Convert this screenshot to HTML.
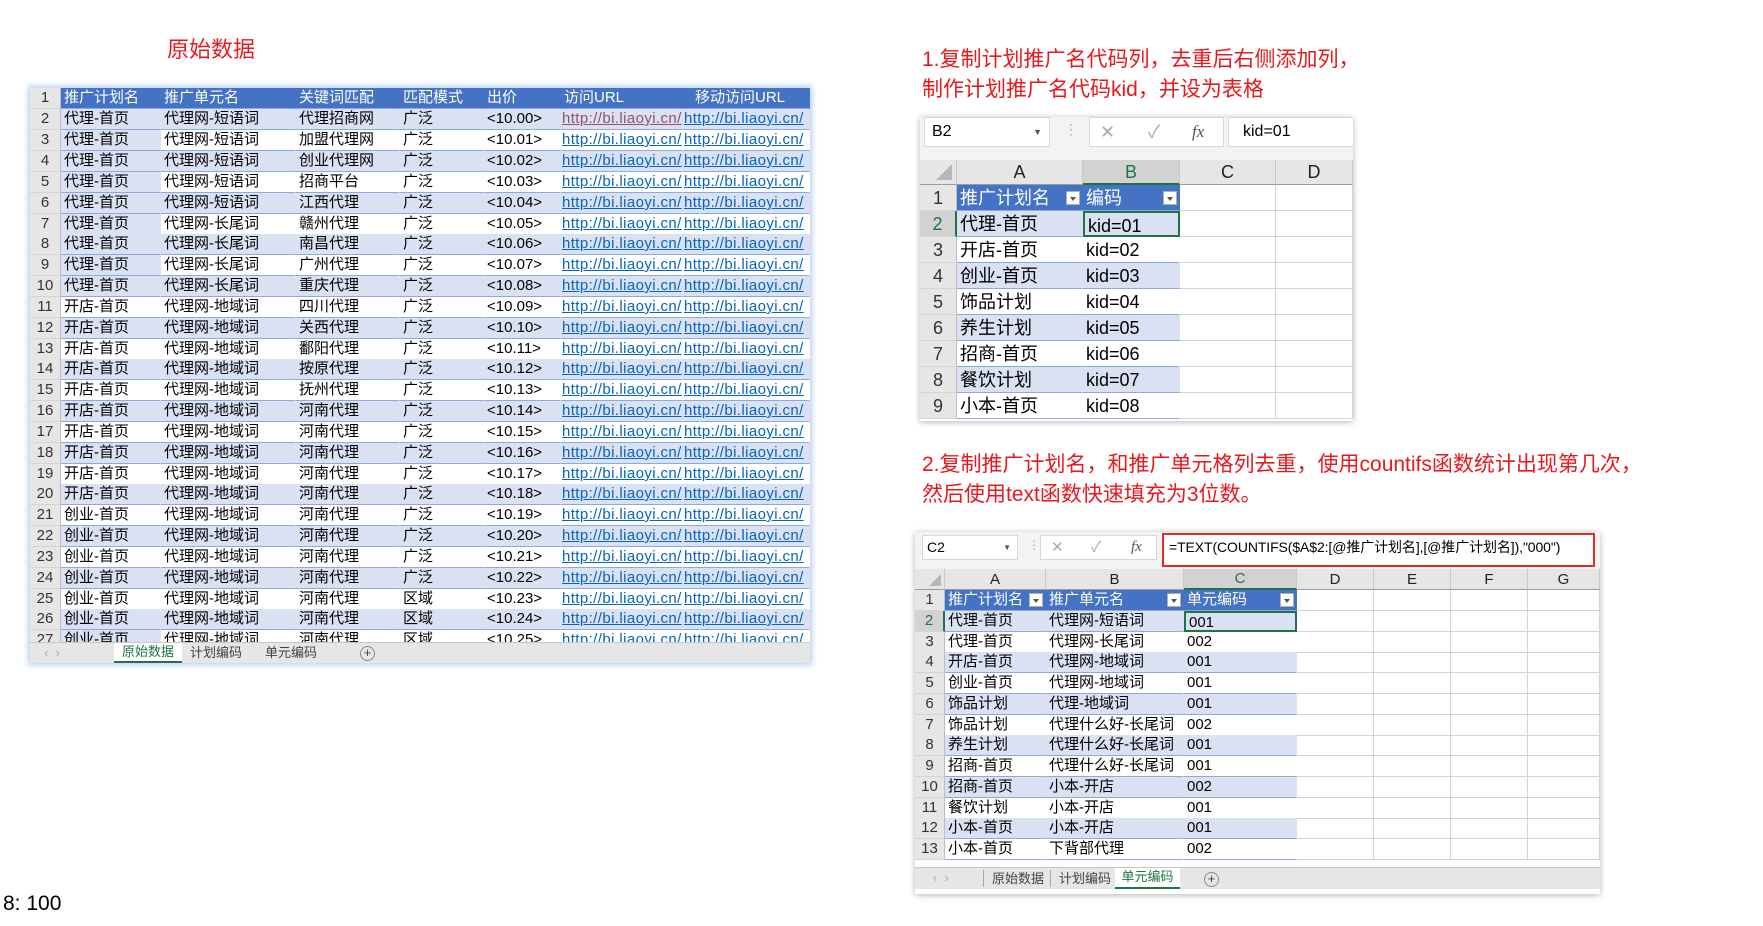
<!DOCTYPE html>
<html><head><meta charset="utf-8">
<style>
*{box-sizing:border-box;margin:0;padding:0}
body{width:1763px;height:926px;background:#fff;position:relative;overflow:hidden;font-family:"Liberation Sans","Noto Sans CJK SC",sans-serif;color:#000}
.abs{position:absolute}
.red{color:#e8191e;font-family:"Liberation Sans","Noto Sans CJK SC",sans-serif}
.r{position:absolute;left:0;display:flex;white-space:nowrap}
.c{overflow:hidden;white-space:nowrap;border-right:1px solid #d4d4d4;border-bottom:1px solid #d4d4d4;padding-left:3px;flex:none}
.n{background:#e6e6e6;text-align:center;padding-left:0;border-right:1px solid #bdbdbd;color:#333}
.h{background:#4472c4;color:#fff;border-right:1px solid #4472c4;border-bottom:1px solid #8ea9db}
.b{background:#d9e1f2;border-right-color:#d9e1f2;border-bottom:1px solid #8ea9db}
.w{background:#fff;border-right-color:#fff;border-bottom:1px solid #8ea9db}
.ln{color:#0563c1;text-decoration:underline;letter-spacing:0.4px;padding-left:1px}
.p0 .r{height:21px;line-height:20px;font-size:15px}
.fb{position:absolute;background:#f3f3f3}
.box{position:absolute;background:#fff;border:1px solid #d6d6d6}
.dd{display:inline-block;width:14px;height:14px;background:#fff;border:1px solid #b0b0b0;position:absolute;top:50%;margin-top:-7px;right:2px}
.dd:after{content:"";position:absolute;left:3px;top:5px;border-left:3px solid transparent;border-right:3px solid transparent;border-top:4px solid #555}
.ch{position:absolute;background:#e6e6e6;text-align:center;border-right:1px solid #c8c8c8;border-bottom:1px solid #9b9b9b;color:#222}
.tabs{position:absolute;background:#e6e6e6;font-size:13px;color:#444}
</style></head><body>

<div class="abs red" style="left:167px;top:36px;font-size:22px;line-height:28px">原始数据</div>

<!-- Panel 0 -->
<div class="abs p0" style="left:30px;top:88px;width:780px;height:575px;box-shadow:0 0 6px 2px #b8cdf0;overflow:hidden">
<div class="r" style="top:0"><div class="c n" style="width:31px">1</div><div class="c h" style="width:100px">推广计划名</div><div class="c h" style="width:135px">推广单元名</div><div class="c h" style="width:104px">关键词匹配</div><div class="c h" style="width:84px">匹配模式</div><div class="c h" style="width:77px">出价</div><div class="c h" style="width:122px">访问URL</div><div class="c h" style="width:127px;padding-left:12px">移动访问URL</div></div>
<div class="r" style="top:21px"><div class="c n" style="width:31px">2</div><div class="c b" style="width:100px">代理-首页</div><div class="c b" style="width:135px">代理网-短语词</div><div class="c b" style="width:104px">代理招商网</div><div class="c b" style="width:84px">广泛</div><div class="c b" style="width:77px">&lt;10.00&gt;</div><div class="c b ln" style="width:122px;color:#954f72">http://bi.liaoyi.cn/</div><div class="c b ln" style="width:127px">http://bi.liaoyi.cn/</div></div>
<div class="r" style="top:42px"><div class="c n" style="width:31px">3</div><div class="c b" style="width:100px">代理-首页</div><div class="c w" style="width:135px">代理网-短语词</div><div class="c w" style="width:104px">加盟代理网</div><div class="c w" style="width:84px">广泛</div><div class="c w" style="width:77px">&lt;10.01&gt;</div><div class="c w ln" style="width:122px">http://bi.liaoyi.cn/</div><div class="c w ln" style="width:127px">http://bi.liaoyi.cn/</div></div>
<div class="r" style="top:63px"><div class="c n" style="width:31px">4</div><div class="c b" style="width:100px">代理-首页</div><div class="c b" style="width:135px">代理网-短语词</div><div class="c b" style="width:104px">创业代理网</div><div class="c b" style="width:84px">广泛</div><div class="c b" style="width:77px">&lt;10.02&gt;</div><div class="c b ln" style="width:122px">http://bi.liaoyi.cn/</div><div class="c b ln" style="width:127px">http://bi.liaoyi.cn/</div></div>
<div class="r" style="top:84px"><div class="c n" style="width:31px">5</div><div class="c b" style="width:100px">代理-首页</div><div class="c w" style="width:135px">代理网-短语词</div><div class="c w" style="width:104px">招商平台</div><div class="c w" style="width:84px">广泛</div><div class="c w" style="width:77px">&lt;10.03&gt;</div><div class="c w ln" style="width:122px">http://bi.liaoyi.cn/</div><div class="c w ln" style="width:127px">http://bi.liaoyi.cn/</div></div>
<div class="r" style="top:105px"><div class="c n" style="width:31px">6</div><div class="c b" style="width:100px">代理-首页</div><div class="c b" style="width:135px">代理网-短语词</div><div class="c b" style="width:104px">江西代理</div><div class="c b" style="width:84px">广泛</div><div class="c b" style="width:77px">&lt;10.04&gt;</div><div class="c b ln" style="width:122px">http://bi.liaoyi.cn/</div><div class="c b ln" style="width:127px">http://bi.liaoyi.cn/</div></div>
<div class="r" style="top:126px"><div class="c n" style="width:31px">7</div><div class="c b" style="width:100px">代理-首页</div><div class="c w" style="width:135px">代理网-长尾词</div><div class="c w" style="width:104px">赣州代理</div><div class="c w" style="width:84px">广泛</div><div class="c w" style="width:77px">&lt;10.05&gt;</div><div class="c w ln" style="width:122px">http://bi.liaoyi.cn/</div><div class="c w ln" style="width:127px">http://bi.liaoyi.cn/</div></div>
<div class="r" style="top:146px"><div class="c n" style="width:31px">8</div><div class="c b" style="width:100px">代理-首页</div><div class="c b" style="width:135px">代理网-长尾词</div><div class="c b" style="width:104px">南昌代理</div><div class="c b" style="width:84px">广泛</div><div class="c b" style="width:77px">&lt;10.06&gt;</div><div class="c b ln" style="width:122px">http://bi.liaoyi.cn/</div><div class="c b ln" style="width:127px">http://bi.liaoyi.cn/</div></div>
<div class="r" style="top:167px"><div class="c n" style="width:31px">9</div><div class="c b" style="width:100px">代理-首页</div><div class="c w" style="width:135px">代理网-长尾词</div><div class="c w" style="width:104px">广州代理</div><div class="c w" style="width:84px">广泛</div><div class="c w" style="width:77px">&lt;10.07&gt;</div><div class="c w ln" style="width:122px">http://bi.liaoyi.cn/</div><div class="c w ln" style="width:127px">http://bi.liaoyi.cn/</div></div>
<div class="r" style="top:188px"><div class="c n" style="width:31px">10</div><div class="c b" style="width:100px">代理-首页</div><div class="c b" style="width:135px">代理网-长尾词</div><div class="c b" style="width:104px">重庆代理</div><div class="c b" style="width:84px">广泛</div><div class="c b" style="width:77px">&lt;10.08&gt;</div><div class="c b ln" style="width:122px">http://bi.liaoyi.cn/</div><div class="c b ln" style="width:127px">http://bi.liaoyi.cn/</div></div>
<div class="r" style="top:209px"><div class="c n" style="width:31px">11</div><div class="c w" style="width:100px">开店-首页</div><div class="c w" style="width:135px">代理网-地域词</div><div class="c w" style="width:104px">四川代理</div><div class="c w" style="width:84px">广泛</div><div class="c w" style="width:77px">&lt;10.09&gt;</div><div class="c w ln" style="width:122px">http://bi.liaoyi.cn/</div><div class="c w ln" style="width:127px">http://bi.liaoyi.cn/</div></div>
<div class="r" style="top:230px"><div class="c n" style="width:31px">12</div><div class="c b" style="width:100px">开店-首页</div><div class="c b" style="width:135px">代理网-地域词</div><div class="c b" style="width:104px">关西代理</div><div class="c b" style="width:84px">广泛</div><div class="c b" style="width:77px">&lt;10.10&gt;</div><div class="c b ln" style="width:122px">http://bi.liaoyi.cn/</div><div class="c b ln" style="width:127px">http://bi.liaoyi.cn/</div></div>
<div class="r" style="top:251px"><div class="c n" style="width:31px">13</div><div class="c w" style="width:100px">开店-首页</div><div class="c w" style="width:135px">代理网-地域词</div><div class="c w" style="width:104px">鄱阳代理</div><div class="c w" style="width:84px">广泛</div><div class="c w" style="width:77px">&lt;10.11&gt;</div><div class="c w ln" style="width:122px">http://bi.liaoyi.cn/</div><div class="c w ln" style="width:127px">http://bi.liaoyi.cn/</div></div>
<div class="r" style="top:271px"><div class="c n" style="width:31px">14</div><div class="c b" style="width:100px">开店-首页</div><div class="c b" style="width:135px">代理网-地域词</div><div class="c b" style="width:104px">按原代理</div><div class="c b" style="width:84px">广泛</div><div class="c b" style="width:77px">&lt;10.12&gt;</div><div class="c b ln" style="width:122px">http://bi.liaoyi.cn/</div><div class="c b ln" style="width:127px">http://bi.liaoyi.cn/</div></div>
<div class="r" style="top:292px"><div class="c n" style="width:31px">15</div><div class="c w" style="width:100px">开店-首页</div><div class="c w" style="width:135px">代理网-地域词</div><div class="c w" style="width:104px">抚州代理</div><div class="c w" style="width:84px">广泛</div><div class="c w" style="width:77px">&lt;10.13&gt;</div><div class="c w ln" style="width:122px">http://bi.liaoyi.cn/</div><div class="c w ln" style="width:127px">http://bi.liaoyi.cn/</div></div>
<div class="r" style="top:313px"><div class="c n" style="width:31px">16</div><div class="c b" style="width:100px">开店-首页</div><div class="c b" style="width:135px">代理网-地域词</div><div class="c b" style="width:104px">河南代理</div><div class="c b" style="width:84px">广泛</div><div class="c b" style="width:77px">&lt;10.14&gt;</div><div class="c b ln" style="width:122px">http://bi.liaoyi.cn/</div><div class="c b ln" style="width:127px">http://bi.liaoyi.cn/</div></div>
<div class="r" style="top:334px"><div class="c n" style="width:31px">17</div><div class="c w" style="width:100px">开店-首页</div><div class="c w" style="width:135px">代理网-地域词</div><div class="c w" style="width:104px">河南代理</div><div class="c w" style="width:84px">广泛</div><div class="c w" style="width:77px">&lt;10.15&gt;</div><div class="c w ln" style="width:122px">http://bi.liaoyi.cn/</div><div class="c w ln" style="width:127px">http://bi.liaoyi.cn/</div></div>
<div class="r" style="top:355px"><div class="c n" style="width:31px">18</div><div class="c b" style="width:100px">开店-首页</div><div class="c b" style="width:135px">代理网-地域词</div><div class="c b" style="width:104px">河南代理</div><div class="c b" style="width:84px">广泛</div><div class="c b" style="width:77px">&lt;10.16&gt;</div><div class="c b ln" style="width:122px">http://bi.liaoyi.cn/</div><div class="c b ln" style="width:127px">http://bi.liaoyi.cn/</div></div>
<div class="r" style="top:376px"><div class="c n" style="width:31px">19</div><div class="c w" style="width:100px">开店-首页</div><div class="c w" style="width:135px">代理网-地域词</div><div class="c w" style="width:104px">河南代理</div><div class="c w" style="width:84px">广泛</div><div class="c w" style="width:77px">&lt;10.17&gt;</div><div class="c w ln" style="width:122px">http://bi.liaoyi.cn/</div><div class="c w ln" style="width:127px">http://bi.liaoyi.cn/</div></div>
<div class="r" style="top:396px"><div class="c n" style="width:31px">20</div><div class="c b" style="width:100px">开店-首页</div><div class="c b" style="width:135px">代理网-地域词</div><div class="c b" style="width:104px">河南代理</div><div class="c b" style="width:84px">广泛</div><div class="c b" style="width:77px">&lt;10.18&gt;</div><div class="c b ln" style="width:122px">http://bi.liaoyi.cn/</div><div class="c b ln" style="width:127px">http://bi.liaoyi.cn/</div></div>
<div class="r" style="top:417px"><div class="c n" style="width:31px">21</div><div class="c w" style="width:100px">创业-首页</div><div class="c w" style="width:135px">代理网-地域词</div><div class="c w" style="width:104px">河南代理</div><div class="c w" style="width:84px">广泛</div><div class="c w" style="width:77px">&lt;10.19&gt;</div><div class="c w ln" style="width:122px">http://bi.liaoyi.cn/</div><div class="c w ln" style="width:127px">http://bi.liaoyi.cn/</div></div>
<div class="r" style="top:438px"><div class="c n" style="width:31px">22</div><div class="c b" style="width:100px">创业-首页</div><div class="c b" style="width:135px">代理网-地域词</div><div class="c b" style="width:104px">河南代理</div><div class="c b" style="width:84px">广泛</div><div class="c b" style="width:77px">&lt;10.20&gt;</div><div class="c b ln" style="width:122px">http://bi.liaoyi.cn/</div><div class="c b ln" style="width:127px">http://bi.liaoyi.cn/</div></div>
<div class="r" style="top:459px"><div class="c n" style="width:31px">23</div><div class="c w" style="width:100px">创业-首页</div><div class="c w" style="width:135px">代理网-地域词</div><div class="c w" style="width:104px">河南代理</div><div class="c w" style="width:84px">广泛</div><div class="c w" style="width:77px">&lt;10.21&gt;</div><div class="c w ln" style="width:122px">http://bi.liaoyi.cn/</div><div class="c w ln" style="width:127px">http://bi.liaoyi.cn/</div></div>
<div class="r" style="top:480px"><div class="c n" style="width:31px">24</div><div class="c b" style="width:100px">创业-首页</div><div class="c b" style="width:135px">代理网-地域词</div><div class="c b" style="width:104px">河南代理</div><div class="c b" style="width:84px">广泛</div><div class="c b" style="width:77px">&lt;10.22&gt;</div><div class="c b ln" style="width:122px">http://bi.liaoyi.cn/</div><div class="c b ln" style="width:127px">http://bi.liaoyi.cn/</div></div>
<div class="r" style="top:501px"><div class="c n" style="width:31px">25</div><div class="c w" style="width:100px">创业-首页</div><div class="c w" style="width:135px">代理网-地域词</div><div class="c w" style="width:104px">河南代理</div><div class="c w" style="width:84px">区域</div><div class="c w" style="width:77px">&lt;10.23&gt;</div><div class="c w ln" style="width:122px">http://bi.liaoyi.cn/</div><div class="c w ln" style="width:127px">http://bi.liaoyi.cn/</div></div>
<div class="r" style="top:521px"><div class="c n" style="width:31px">26</div><div class="c b" style="width:100px">创业-首页</div><div class="c b" style="width:135px">代理网-地域词</div><div class="c b" style="width:104px">河南代理</div><div class="c b" style="width:84px">区域</div><div class="c b" style="width:77px">&lt;10.24&gt;</div><div class="c b ln" style="width:122px">http://bi.liaoyi.cn/</div><div class="c b ln" style="width:127px">http://bi.liaoyi.cn/</div></div>
<div class="r" style="top:542px"><div class="c n" style="width:31px">27</div><div class="c b" style="width:100px">创业-首页</div><div class="c w" style="width:135px">代理网-地域词</div><div class="c w" style="width:104px">河南代理</div><div class="c w" style="width:84px">区域</div><div class="c w" style="width:77px">&lt;10.25&gt;</div><div class="c w ln" style="width:122px">http://bi.liaoyi.cn/</div><div class="c w ln" style="width:127px">http://bi.liaoyi.cn/</div></div>
<div class="tabs" style="left:0;top:554px;width:780px;height:21px;border-top:1px solid #c8c8c8">
 <span class="abs" style="left:14px;top:2px;color:#aaa">‹ &nbsp;›</span>
 <span class="abs" style="left:84px;top:0;width:68px;height:20px;background:#fff;color:#217346;text-align:center;line-height:18px;border-bottom:2px solid #217346">原始数据</span>
 <span class="abs" style="left:160px;top:1px;line-height:18px">计划编码</span>
 <span class="abs" style="left:235px;top:1px;line-height:18px">单元编码</span>
 <span class="abs" style="left:330px;top:3px;width:15px;height:15px;border:1px solid #888;border-radius:50%;text-align:center;line-height:12px;font-size:13px">+</span>
</div>
</div>

<div class="abs" style="left:3px;top:891px;font-size:21px;line-height:26px">8: 100</div>

<!-- Panel 1 -->
<div class="abs red" style="left:922px;top:45px;font-size:21px;line-height:30px">1.复制计划推广名代码列，去重后右侧添加列，<br>制作计划推广名代码kid，并设为表格</div>
<div class="abs" style="left:920px;top:117px;width:433px;height:304px;box-shadow:0 1px 6px rgba(0,0,0,.3);background:#fff;overflow:hidden;font-size:18px">
 <div class="fb" style="left:0;top:0;width:433px;height:43px"></div>
 <div class="box" style="left:4px;top:0;width:126px;height:30px;font-size:16px;line-height:28px;padding-left:7px">B2<span class="abs" style="right:7px;top:0;font-size:9px;color:#555">▼</span></div>
 <span class="abs" style="left:144px;top:4px;color:#aaa;font-size:14px">⋮</span>
 <div class="box" style="left:169px;top:0;width:135px;height:30px;color:#aaa;font-size:18px;line-height:28px"><span style="position:absolute;left:10px">✕</span><span style="position:absolute;left:58px">✓</span><span style="position:absolute;left:102px;font-family:'Liberation Serif',serif;font-style:italic;color:#555;font-size:17px">fx</span></div>
 <div class="box" style="left:308px;top:0;width:126px;height:30px;font-size:16px;line-height:28px;padding-left:14px">kid=01</div>
 <div class="ch" style="left:0;top:43px;width:37px;height:25px;background:#e6e6e6"><span class="abs" style="right:4px;bottom:4px;width:0;height:0;border-left:16px solid transparent;border-bottom:16px solid #b7b7b7"></span></div>
 <div class="ch" style="left:37px;top:43px;width:126px;height:25px;line-height:25px">A</div>
 <div class="ch" style="left:163px;top:43px;width:97px;height:25px;line-height:24px;background:#d2d2d2;color:#217346;border-bottom:2px solid #217346">B</div>
 <div class="ch" style="left:260px;top:43px;width:96px;height:25px;line-height:25px">C</div>
 <div class="ch" style="left:356px;top:43px;width:77px;height:25px;line-height:25px">D</div>
 <div class="abs" style="left:0;top:68px;width:433px;line-height:26px">
  <div class="r" style="top:0;height:26px"><div class="c n" style="width:37px">1</div><div class="c h" style="width:126px;position:relative">推广计划名<span class="dd"></span></div><div class="c h" style="width:97px;position:relative">编码<span class="dd"></span></div><div class="c" style="width:96px"></div><div class="c" style="width:77px"></div></div>
  <div class="r" style="top:26px;height:26px"><div class="c n" style="width:37px;color:#217346;background:#d2d2d2;border-right:2px solid #217346">2</div><div class="c b" style="width:126px">代理-首页</div><div class="c b" style="width:97px;border:2px solid #217346">kid=01</div><div class="c" style="width:96px"></div><div class="c" style="width:77px"></div></div>
  <div class="r" style="top:52px;height:26px"><div class="c n" style="width:37px">3</div><div class="c w" style="width:126px">开店-首页</div><div class="c w" style="width:97px">kid=02</div><div class="c" style="width:96px"></div><div class="c" style="width:77px"></div></div>
  <div class="r" style="top:78px;height:26px"><div class="c n" style="width:37px">4</div><div class="c b" style="width:126px">创业-首页</div><div class="c b" style="width:97px">kid=03</div><div class="c" style="width:96px"></div><div class="c" style="width:77px"></div></div>
  <div class="r" style="top:104px;height:26px"><div class="c n" style="width:37px">5</div><div class="c w" style="width:126px">饰品计划</div><div class="c w" style="width:97px">kid=04</div><div class="c" style="width:96px"></div><div class="c" style="width:77px"></div></div>
  <div class="r" style="top:130px;height:26px"><div class="c n" style="width:37px">6</div><div class="c b" style="width:126px">养生计划</div><div class="c b" style="width:97px">kid=05</div><div class="c" style="width:96px"></div><div class="c" style="width:77px"></div></div>
  <div class="r" style="top:156px;height:26px"><div class="c n" style="width:37px">7</div><div class="c w" style="width:126px">招商-首页</div><div class="c w" style="width:97px">kid=06</div><div class="c" style="width:96px"></div><div class="c" style="width:77px"></div></div>
  <div class="r" style="top:182px;height:26px"><div class="c n" style="width:37px">8</div><div class="c b" style="width:126px">餐饮计划</div><div class="c b" style="width:97px">kid=07</div><div class="c" style="width:96px"></div><div class="c" style="width:77px"></div></div>
  <div class="r" style="top:208px;height:26px"><div class="c n" style="width:37px">9</div><div class="c w" style="width:126px">小本-首页</div><div class="c w" style="width:97px">kid=08</div><div class="c" style="width:96px"></div><div class="c" style="width:77px"></div></div>
 </div>
</div>

<!-- Panel 2 -->
<div class="abs red" style="left:922px;top:450px;font-size:21px;line-height:30px">2.复制推广计划名，和推广单元格列去重，使用countifs函数统计出现第几次，<br>然后使用text函数快速填充为3位数。</div>
<div class="abs" style="left:915px;top:532px;width:685px;height:362px;box-shadow:0 1px 6px rgba(0,0,0,.3);background:#fff;overflow:hidden;font-size:15px">
 <div class="fb" style="left:0;top:0;width:685px;height:37px"></div>
 <div class="box" style="left:7px;top:3px;width:96px;height:25px;font-size:14px;line-height:23px;padding-left:4px">C2<span class="abs" style="right:6px;top:0;font-size:8px;color:#555">▼</span></div>
 <span class="abs" style="left:113px;top:6px;color:#aaa;font-size:12px">⋮</span>
 <div class="box" style="left:125px;top:3px;width:117px;height:25px;color:#aaa;font-size:15px;line-height:23px"><span style="position:absolute;left:10px">✕</span><span style="position:absolute;left:50px">✓</span><span style="position:absolute;left:90px;font-family:'Liberation Serif',serif;font-style:italic;color:#555">fx</span></div>
 <div class="box" style="left:247px;top:1px;width:433px;height:34px;border:2px solid #e52a2a;font-size:14px;line-height:24px;padding-left:5px;white-space:nowrap;letter-spacing:-0.1px">=TEXT(COUNTIFS($A$2:[@推广计划名],[@推广计划名]),"000")</div>
 <div class="ch" style="left:0;top:37px;width:30px;height:21px"><span class="abs" style="right:3px;bottom:3px;width:0;height:0;border-left:12px solid transparent;border-bottom:12px solid #b7b7b7"></span></div>
 <div class="ch" style="left:30px;top:37px;width:101px;height:21px;line-height:21px">A</div>
 <div class="ch" style="left:131px;top:37px;width:138px;height:21px;line-height:21px">B</div>
 <div class="ch" style="left:269px;top:37px;width:113px;height:21px;line-height:20px;background:#d2d2d2;color:#217346;border-bottom:2px solid #217346">C</div>
 <div class="ch" style="left:382px;top:37px;width:77px;height:21px;line-height:21px">D</div>
 <div class="ch" style="left:459px;top:37px;width:77px;height:21px;line-height:21px">E</div>
 <div class="ch" style="left:536px;top:37px;width:77px;height:21px;line-height:21px">F</div>
 <div class="ch" style="left:613px;top:37px;width:72px;height:21px;line-height:21px">G</div>
 <div class="abs" style="left:0;top:58px;width:685px;line-height:20px">
  <div class="r" style="top:0;height:21px"><div class="c n" style="width:30px">1</div><div class="c h" style="width:101px;position:relative">推广计划名<span class="dd"></span></div><div class="c h" style="width:138px;position:relative">推广单元名<span class="dd"></span></div><div class="c h" style="width:113px;position:relative">单元编码<span class="dd"></span></div><div class="c" style="width:77px"></div><div class="c" style="width:77px"></div><div class="c" style="width:77px"></div><div class="c" style="width:72px"></div></div>
  <div class="r" style="top:21px;height:21px"><div class="c n" style="width:30px;color:#217346;background:#d2d2d2;border-right:2px solid #217346">2</div><div class="c b" style="width:101px">代理-首页</div><div class="c b" style="width:138px">代理网-短语词</div><div class="c b" style="width:113px;border:2px solid #217346">001</div><div class="c" style="width:77px"></div><div class="c" style="width:77px"></div><div class="c" style="width:77px"></div><div class="c" style="width:72px"></div></div>
  <div class="r" style="top:42px;height:21px"><div class="c n" style="width:30px">3</div><div class="c w" style="width:101px">代理-首页</div><div class="c w" style="width:138px">代理网-长尾词</div><div class="c w" style="width:113px">002</div><div class="c" style="width:77px"></div><div class="c" style="width:77px"></div><div class="c" style="width:77px"></div><div class="c" style="width:72px"></div></div>
  <div class="r" style="top:62px;height:21px"><div class="c n" style="width:30px">4</div><div class="c b" style="width:101px">开店-首页</div><div class="c b" style="width:138px">代理网-地域词</div><div class="c b" style="width:113px">001</div><div class="c" style="width:77px"></div><div class="c" style="width:77px"></div><div class="c" style="width:77px"></div><div class="c" style="width:72px"></div></div>
  <div class="r" style="top:83px;height:21px"><div class="c n" style="width:30px">5</div><div class="c w" style="width:101px">创业-首页</div><div class="c w" style="width:138px">代理网-地域词</div><div class="c w" style="width:113px">001</div><div class="c" style="width:77px"></div><div class="c" style="width:77px"></div><div class="c" style="width:77px"></div><div class="c" style="width:72px"></div></div>
  <div class="r" style="top:104px;height:21px"><div class="c n" style="width:30px">6</div><div class="c b" style="width:101px">饰品计划</div><div class="c b" style="width:138px">代理-地域词</div><div class="c b" style="width:113px">001</div><div class="c" style="width:77px"></div><div class="c" style="width:77px"></div><div class="c" style="width:77px"></div><div class="c" style="width:72px"></div></div>
  <div class="r" style="top:125px;height:21px"><div class="c n" style="width:30px">7</div><div class="c w" style="width:101px">饰品计划</div><div class="c w" style="width:138px">代理什么好-长尾词</div><div class="c w" style="width:113px">002</div><div class="c" style="width:77px"></div><div class="c" style="width:77px"></div><div class="c" style="width:77px"></div><div class="c" style="width:72px"></div></div>
  <div class="r" style="top:145px;height:21px"><div class="c n" style="width:30px">8</div><div class="c b" style="width:101px">养生计划</div><div class="c b" style="width:138px">代理什么好-长尾词</div><div class="c b" style="width:113px">001</div><div class="c" style="width:77px"></div><div class="c" style="width:77px"></div><div class="c" style="width:77px"></div><div class="c" style="width:72px"></div></div>
  <div class="r" style="top:166px;height:21px"><div class="c n" style="width:30px">9</div><div class="c w" style="width:101px">招商-首页</div><div class="c w" style="width:138px">代理什么好-长尾词</div><div class="c w" style="width:113px">001</div><div class="c" style="width:77px"></div><div class="c" style="width:77px"></div><div class="c" style="width:77px"></div><div class="c" style="width:72px"></div></div>
  <div class="r" style="top:187px;height:21px"><div class="c n" style="width:30px">10</div><div class="c b" style="width:101px">招商-首页</div><div class="c b" style="width:138px">小本-开店</div><div class="c b" style="width:113px">002</div><div class="c" style="width:77px"></div><div class="c" style="width:77px"></div><div class="c" style="width:77px"></div><div class="c" style="width:72px"></div></div>
  <div class="r" style="top:208px;height:21px"><div class="c n" style="width:30px">11</div><div class="c w" style="width:101px">餐饮计划</div><div class="c w" style="width:138px">小本-开店</div><div class="c w" style="width:113px">001</div><div class="c" style="width:77px"></div><div class="c" style="width:77px"></div><div class="c" style="width:77px"></div><div class="c" style="width:72px"></div></div>
  <div class="r" style="top:228px;height:21px"><div class="c n" style="width:30px">12</div><div class="c b" style="width:101px">小本-首页</div><div class="c b" style="width:138px">小本-开店</div><div class="c b" style="width:113px">001</div><div class="c" style="width:77px"></div><div class="c" style="width:77px"></div><div class="c" style="width:77px"></div><div class="c" style="width:72px"></div></div>
  <div class="r" style="top:249px;height:21px"><div class="c n" style="width:30px">13</div><div class="c w" style="width:101px">小本-首页</div><div class="c w" style="width:138px">下背部代理</div><div class="c w" style="width:113px">002</div><div class="c" style="width:77px"></div><div class="c" style="width:77px"></div><div class="c" style="width:77px"></div><div class="c" style="width:72px"></div></div>
 </div>
 <div class="tabs" style="left:0;top:335px;width:685px;height:22px;border-top:1px solid #c8c8c8">
  <span class="abs" style="left:18px;top:2px;color:#aaa">‹ &nbsp;›</span>
  <span class="abs" style="left:68px;top:2px;border-left:1px solid #aaa;padding-left:8px;line-height:17px">原始数据</span>
  <span class="abs" style="left:135px;top:2px;border-left:1px solid #aaa;padding-left:8px;line-height:17px">计划编码</span>
  <span class="abs" style="left:200px;top:0;width:65px;height:21px;background:#fff;color:#217346;text-align:center;line-height:18px;border-bottom:2px solid #217346">单元编码</span>
  <span class="abs" style="left:289px;top:4px;width:15px;height:15px;border:1px solid #888;border-radius:50%;text-align:center;line-height:12px;font-size:13px">+</span>
 </div>
</div>
</body></html>
